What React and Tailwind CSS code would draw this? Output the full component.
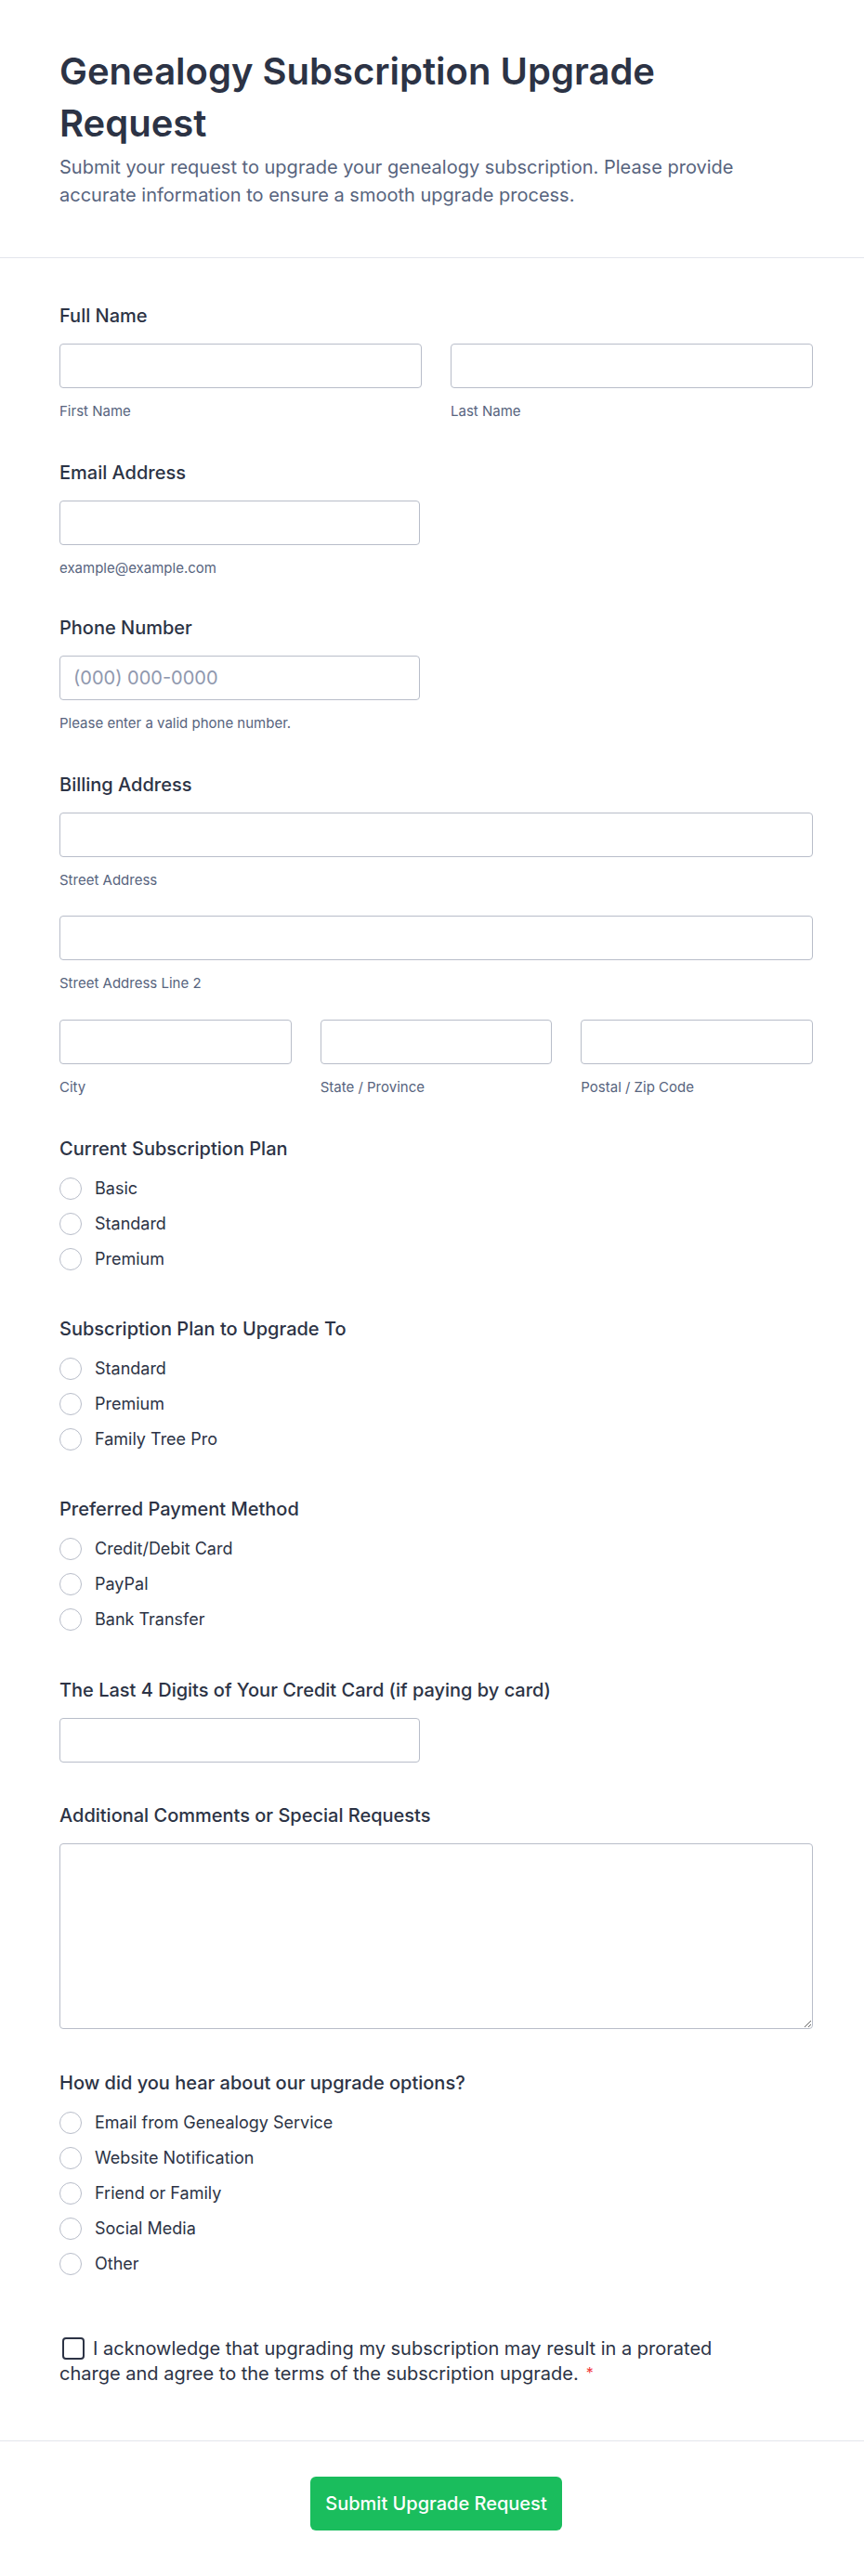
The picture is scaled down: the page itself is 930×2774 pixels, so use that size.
import React from "react";

const inputClass =
  "block w-full h-12 rounded-[4px] border border-[#b8bdc9] bg-white px-[14px] text-xl text-[#2c3345] placeholder:text-[#8f98ae] focus:outline-none";

function Label({ children }) {
  return <div className="text-xl leading-7 font-medium text-[#2c3345] mb-4">{children}</div>;
}

function SubLabel({ children }) {
  return <div className="mt-[15px] text-[15px] leading-5 text-[#57647e]">{children}</div>;
}

function RadioGroup({ name, options }) {
  return (
    <div className="flex flex-col gap-3">
      {options.map((opt) => (
        <label key={opt} className="relative flex items-center gap-[14px] h-[26px] cursor-pointer">
          <input type="radio" name={name} className="peer sr-only" />
          <span className="w-6 h-6 rounded-full border border-[#b8bdc9] bg-white shrink-0" />
          <span className="text-lg leading-[26px] text-[#2c3345]">{opt}</span>
        </label>
      ))}
    </div>
  );
}

export default function App() {
  return (
    <div className="min-h-screen bg-white font-['Inter',sans-serif]">
      <header className="pl-16 pt-[49px] pb-[52px] border-b border-[#e3e5ec]">
        <div className="w-[760px]">
          <h1 className="text-[40px] leading-[56px] font-semibold text-[#2c3345]">
            Genealogy Subscription Upgrade Request
          </h1>
          <p className="mt-1 text-xl leading-[30px] text-[#57647e]">
            Submit your request to upgrade your genealogy subscription. Please provide accurate information to ensure a smooth upgrade process.
          </p>
        </div>
      </header>

      <form className="pl-16 pr-[55px] pt-12" onSubmit={(e) => e.preventDefault()}>
        <div>
          <Label>Full Name</Label>
          <div className="grid grid-cols-2 gap-[31px]">
            <div>
              <input type="text" className={inputClass} />
              <SubLabel>First Name</SubLabel>
            </div>
            <div>
              <input type="text" className={inputClass} />
              <SubLabel>Last Name</SubLabel>
            </div>
          </div>
        </div>

        <div className="mt-[42px]">
          <Label>Email Address</Label>
          <div className="w-[388px]">
            <input type="email" className={inputClass} />
            <SubLabel>example@example.com</SubLabel>
          </div>
        </div>

        <div className="mt-[40px]">
          <Label>Phone Number</Label>
          <div className="w-[388px]">
            <input type="tel" placeholder="(000) 000-0000" className={inputClass} />
            <SubLabel>Please enter a valid phone number.</SubLabel>
          </div>
        </div>

        <div className="mt-[42px]">
          <Label>Billing Address</Label>
          <input type="text" className={inputClass} />
          <SubLabel>Street Address</SubLabel>
          <input type="text" className={inputClass + " mt-[28px]"} />
          <SubLabel>Street Address Line 2</SubLabel>
          <div className="grid grid-cols-3 gap-[31px] mt-[29px]">
            <div>
              <input type="text" className={inputClass} />
              <SubLabel>City</SubLabel>
            </div>
            <div>
              <input type="text" className={inputClass} />
              <SubLabel>State / Province</SubLabel>
            </div>
            <div>
              <input type="text" className={inputClass} />
              <SubLabel>Postal / Zip Code</SubLabel>
            </div>
          </div>
        </div>

        <div className="mt-[42px]">
          <Label>Current Subscription Plan</Label>
          <RadioGroup name="current" options={["Basic", "Standard", "Premium"]} />
        </div>

        <div className="mt-[48px]">
          <Label>Subscription Plan to Upgrade To</Label>
          <RadioGroup name="upgrade" options={["Standard", "Premium", "Family Tree Pro"]} />
        </div>

        <div className="mt-[48px]">
          <Label>Preferred Payment Method</Label>
          <RadioGroup name="payment" options={["Credit/Debit Card", "PayPal", "Bank Transfer"]} />
        </div>

        <div className="mt-[49px]">
          <Label>The Last 4 Digits of Your Credit Card (if paying by card)</Label>
          <div className="w-[388px]">
            <input type="text" className={inputClass} />
          </div>
        </div>

        <div className="mt-[43px]">
          <Label>Additional Comments or Special Requests</Label>
          <textarea className="block w-full h-[200px] rounded-[4px] border border-[#b8bdc9] bg-white px-[14px] py-3 text-xl text-[#2c3345] focus:outline-none" />
        </div>

        <div className="mt-[44px]">
          <Label>How did you hear about our upgrade options?</Label>
          <RadioGroup
            name="source"
            options={["Email from Genealogy Service", "Website Notification", "Friend or Family", "Social Media", "Other"]}
          />
        </div>

        <div className="mt-[65px] w-[760px] text-xl leading-[27px] text-[#2c3345]">
          <label className="cursor-pointer">
            <span className="inline-block align-middle w-6 h-6 ml-[3px] mr-[9px] -mt-[3px] rounded-[4px] border-2 border-[#2c3345] bg-white" />
            I acknowledge that upgrading my subscription may result in a prorated charge and agree to the terms of the subscription upgrade.
            <span className="ml-2 text-[#f23a3c] align-top text-base">*</span>
          </label>
        </div>
      </form>

      <div className="mt-[58px] border-t border-[#e3e5ec] pt-[38px] pb-[50px] pl-16 pr-[55px] flex justify-center">
        <button
          type="submit"
          className="h-[58px] px-4 rounded-md bg-[#1abd5d] text-xl font-medium text-white"
        >
          Submit Upgrade Request
        </button>
      </div>
    </div>
  );
}
